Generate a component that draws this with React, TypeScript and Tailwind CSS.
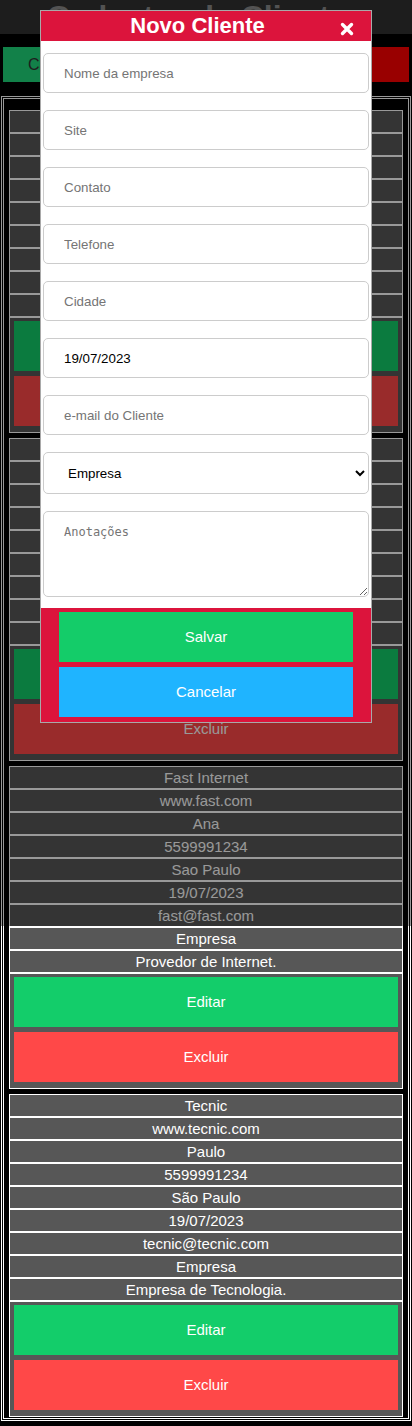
type Cliente = {
  empresa: string;
  site: string;
  contato: string;
  telefone: string;
  cidade: string;
  data: string;
  email: string;
  tipo: string;
  anotacoes: string;
};

const clientes: Cliente[] = [
  {
    empresa: 'Mega Sistemas',
    site: 'www.mega.com',
    contato: 'Carlos',
    telefone: '5599991234',
    cidade: 'Curitiba',
    data: '19/07/2023',
    email: 'mega@mega.com',
    tipo: 'Empresa',
    anotacoes: 'Software de gestão.',
  },
  {
    empresa: 'Loja Central',
    site: 'www.central.com',
    contato: 'Maria',
    telefone: '5599991234',
    cidade: 'Porto Alegre',
    data: '19/07/2023',
    email: 'loja@central.com',
    tipo: 'Empresa',
    anotacoes: 'Comércio varejista.',
  },
  {
    empresa: 'Fast Internet',
    site: 'www.fast.com',
    contato: 'Ana',
    telefone: '5599991234',
    cidade: 'Sao Paulo',
    data: '19/07/2023',
    email: 'fast@fast.com',
    tipo: 'Empresa',
    anotacoes: 'Provedor de Internet.',
  },
  {
    empresa: 'Tecnic',
    site: 'www.tecnic.com',
    contato: 'Paulo',
    telefone: '5599991234',
    cidade: 'São Paulo',
    data: '19/07/2023',
    email: 'tecnic@tecnic.com',
    tipo: 'Empresa',
    anotacoes: 'Empresa de Tecnologia.',
  },
];

function ClienteCard({ c }: { c: Cliente }) {
  const campos = [c.empresa, c.site, c.contato, c.telefone, c.cidade, c.data, c.email, c.tipo, c.anotacoes];
  return (
    <div className="border border-white bg-[#575757]">
      {campos.map((v, i) => (
        <div key={i} className="h-[23px] border-b-2 border-white text-center text-[15px] leading-[21px] text-white">
          {v}
        </div>
      ))}
      <div className="flex flex-col gap-[5px] px-[4px] pt-[3px] pb-[6px]">
        <button type="button" className="h-[50px] bg-[#13cd6a] text-[15px] text-white">
          Editar
        </button>
        <button type="button" className="h-[50px] bg-[#ff4848] text-[15px] text-white">
          Excluir
        </button>
      </div>
    </div>
  );
}

const inputClass =
  'h-[40px] w-full rounded-[5px] border border-[#cccccc] bg-white pl-[20px] text-[13.33px] text-black outline-none placeholder:text-[#757575]';

export default function App() {
  return (
    <div className="relative min-h-[1426px] bg-black font-['Liberation_Sans',Arial,sans-serif]">
      {/* Page header */}
      <header className="h-[34px] overflow-hidden bg-[#313131] text-center text-[32px] font-bold leading-[34px] text-[#8a8a8a]">
        Cadastro de Clientes
      </header>
      <div className="flex justify-between px-[3px] pt-[13px] pb-[14px]">
        <button type="button" className="h-[35px] w-[120px] bg-[#1ed87a] text-[16px] text-[#333333]">
          Cadastrar
        </button>
        <button type="button" className="h-[35px] w-[110px] bg-[#ff0000] text-[16px] text-white">
          Sair
        </button>
      </div>

      {/* Client list */}
      <main className="mx-[1px] flex flex-col gap-[5px] border-[3px] border-double border-white px-[5px] pt-[11px] pb-[1px]">
        {clientes.map((c) => (
          <ClienteCard key={c.email} c={c} />
        ))}
      </main>

      {/* Overlay */}
      <div className="absolute left-0 top-0 h-[926px] w-full bg-black/40" />

      {/* Modal */}
      <div className="absolute left-[40px] top-[10px] w-[332px] border border-[#a9a9a9] bg-white">
        <div className="relative h-[30px] bg-[#dc143c] text-center">
          <h2 className="pr-[17px] text-[22px] font-bold leading-[30px] text-white">Novo Cliente</h2>
          <button type="button" className="absolute right-[17px] top-[11px] text-white">
            <svg width="14" height="14" viewBox="0 0 14 14">
              <path d="M2.5 2.5 L11.5 11.5 M11.5 2.5 L2.5 11.5" stroke="white" strokeWidth="3.4" strokeLinecap="round" />
            </svg>
          </button>
        </div>

        <form className="flex flex-col gap-[17px] px-[2px] pt-[12px] pb-[11px]">
          <input className={inputClass} placeholder="Nome da empresa" />
          <input className={inputClass} placeholder="Site" />
          <input className={inputClass} placeholder="Contato" />
          <input className={inputClass} placeholder="Telefone" />
          <input className={inputClass} placeholder="Cidade" />
          <input className={inputClass} defaultValue="19/07/2023" />
          <input className={inputClass} placeholder="e-mail do Cliente" />
          <select
            className="h-[42px] w-full rounded-[5px] border border-[#cccccc] bg-white pl-[20px] text-[13.33px] text-black outline-none"
            defaultValue="Empresa"
          >
            <option value="Empresa">Empresa</option>
            <option value="Pessoa Física">Pessoa Física</option>
          </select>
          <textarea
            className="h-[86px] w-full rounded-[5px] border border-[#cccccc] bg-white pl-[20px] pt-[11px] font-['DejaVu_Sans_Mono',monospace] text-[12px] text-black outline-none placeholder:text-[#757575]"
            placeholder="Anotações"
          />
        </form>

        <div className="flex flex-col items-center gap-[5px] bg-[#dc143c] pt-[4px] pb-[5px]">
          <button type="button" className="h-[50px] w-[294px] bg-[#14cc69] text-[15px] text-white">
            Salvar
          </button>
          <button type="button" className="h-[50px] w-[294px] bg-[#1fb4ff] text-[15px] text-white">
            Cancelar
          </button>
        </div>
      </div>
    </div>
  );
}
